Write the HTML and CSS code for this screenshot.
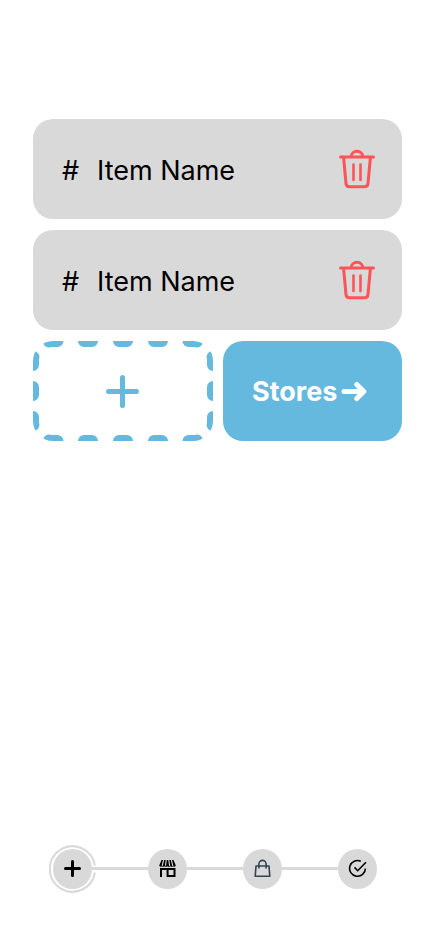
FILE: index.html
```html
<!DOCTYPE html>
<html lang="en">
<head>
<meta charset="utf-8">
<title>Items</title>
<link rel="stylesheet" href="styles.css">
</head>
<body>
<svg width="0" height="0" class="defs">
  <symbol id="trash" viewBox="0 0 36 40">
    <g fill="none" stroke="#fb5558" stroke-width="3" stroke-linecap="round" stroke-linejoin="round">
      <path d="M1.500 8H34.500M4.600 8.500l2.400 26q.3 3.300 3.600 3.300h14.800q3.300 0 3.600-3.300L31.400 8.500M12.300 7.500a5.700 5.200 0 0 1 11.400 0"/>
      <path stroke-width="2.600" d="M14.500 15.500v15.500M21.500 15.500v15.500"/>
    </g>
  </symbol>
</svg>
<main class="screen">
  <section class="list">
    <div class="item"><span class="qty">#</span><span class="name">Item Name</span><svg class="trash"><use href="#trash"/></svg></div>
    <div class="item"><span class="qty">#</span><span class="name">Item Name</span><svg class="trash"><use href="#trash"/></svg></div>
    <div class="actions">
      <div class="add">
        <svg width="180" height="100" viewBox="0 0 180 100">
          <clipPath id="card"><rect width="180" height="100" rx="20"/></clipPath>
          <g fill="none" stroke="#65b9df" stroke-linecap="round">
            <path clip-path="url(#card)" stroke-width="12" d="M16 .4Q18 0 20 0H24.500M51 0h8M86 0h8M121 0h8M155.500 0h4.500q2 0 4 .4M16 99.600Q18 100 20 100H24.500M51 100h8M86 100h8M121 100h8M155.500 100h4.500q2 0 4-.4M.4 16Q0 18 0 20V24M0 46v8M0 76v4q0 2 .4 4M179.600 16Q180 18 180 20V24M180 46v8M180 76v4q0 2-.4 4"/>
            <path stroke-width="5" d="M75.500 50.500h28M89.500 36.500v28"/>
          </g>
        </svg>
      </div>
      <div class="stores"><span class="label">Stores</span>
        <svg width="26" height="22" viewBox="0 0 26 22"><path d="M3 11.500h19.500M15.800 4.500l7 7-7 7" fill="none" stroke="#fff" stroke-width="5" stroke-linecap="round" stroke-linejoin="round"/></svg>
      </div>
    </div>
  </section>
  <nav class="steps">
    <div class="step active">
      <svg class="ring" width="48" height="48" viewBox="0 0 48 48"><path d="M45.900 20.500A22.700 22.700 0 1 0 45.900 27.500" fill="none" stroke="#d9d9d9" stroke-width="2"/></svg>
      <svg width="19" height="20" viewBox="0 0 19 20"><path d="M2.500 9.500h14M9.500 2.500v14" fill="none" stroke="#000" stroke-width="3" stroke-linecap="round"/></svg>
    </div>
    <i class="line"></i>
    <div class="step">
      <svg width="19" height="20" viewBox="0 0 19 20"><path d="M3.500 1h12l2.300 5.500q-1 2-2.700.7-1.400 1.300-2.800 0-1.400 1.300-2.800 0-1.400 1.300-2.800 0-1.400 1.300-2.800 0-1.700 1.300-2.700-.7Z"/><path d="M5.600 1 4.200 6.800M8.200 1 7.500 6.800M10.800 1l.8 5.800M13.400 1l1.400 5.800" fill="none" stroke="#d9d9d9" stroke-width="1.100"/><path d="M3 18V9.900h13.500v7.200H9.600V10" fill="none" stroke="#000" stroke-width="2"/></svg>
    </div>
    <i class="line"></i>
    <div class="step">
      <svg width="19" height="20" viewBox="0 0 19 20"><path d="M3 7h13l.8 10.300H2.200ZM5.900 9.500V5a3.600 3.600 0 0 1 7.200 0v4.500" fill="none" stroke="#334155" stroke-width="1.600" stroke-linejoin="round"/></svg>
    </div>
    <i class="line"></i>
    <div class="step">
      <svg width="19" height="20" viewBox="0 0 19 20"><path d="M12.800 2.200A7.900 7.900 0 1 0 17.400 9.500M6.500 8.400l3.200 3.300L18 3.200" fill="none" stroke="#000" stroke-width="1.600"/></svg>
    </div>
  </nav>
</main>
</body>
</html>
```

FILE: styles.css
```css
* { box-sizing: border-box; }
body { margin: 0; background: #fff; color: #000; font-family: Inter, "Liberation Sans", sans-serif; }
svg { display: block; flex: none; }
.defs { position: absolute; }
.screen {
  height: 932px;
  padding: 119px 28px 43px 33px;
  display: flex;
  flex-direction: column;
  justify-content: space-between;
}
.list { display: flex; flex-direction: column; gap: 11px; }
.item {
  height: 100px;
  padding: 0 27px 0 29px;
  border-radius: 20px;
  background: #d9d9d9;
  display: flex;
  align-items: center;
  font-size: 27px;
  line-height: 34px;
}
.qty { width: 35px; padding-top: 4px; }
.name { flex: 1; padding-top: 4px; }
.trash { width: 36px; height: 40px; }
.actions { display: flex; gap: 10px; }
.add { width: 180px; height: 100px; }
.stores {
  width: 179px;
  height: 100px;
  padding-left: 29px;
  border-radius: 20px;
  background: #65b9df;
  color: #fff;
  font-size: 27px;
  font-weight: 700;
  line-height: 34px;
  display: flex;
  align-items: center;
  gap: 4px;
}
.label { padding-top: 2px; }
.steps { display: flex; align-items: center; margin-left: 20px; }
.step {
  position: relative;
  width: 39px;
  height: 40px;
  border-radius: 50%;
  background: #d9d9d9;
  display: flex;
  align-items: center;
  justify-content: center;
}
.ring { position: absolute; left: -4px; top: -4px; }
.line { width: 56px; height: 3px; background: #d9d9d9; margin-bottom: 1px; }
```
